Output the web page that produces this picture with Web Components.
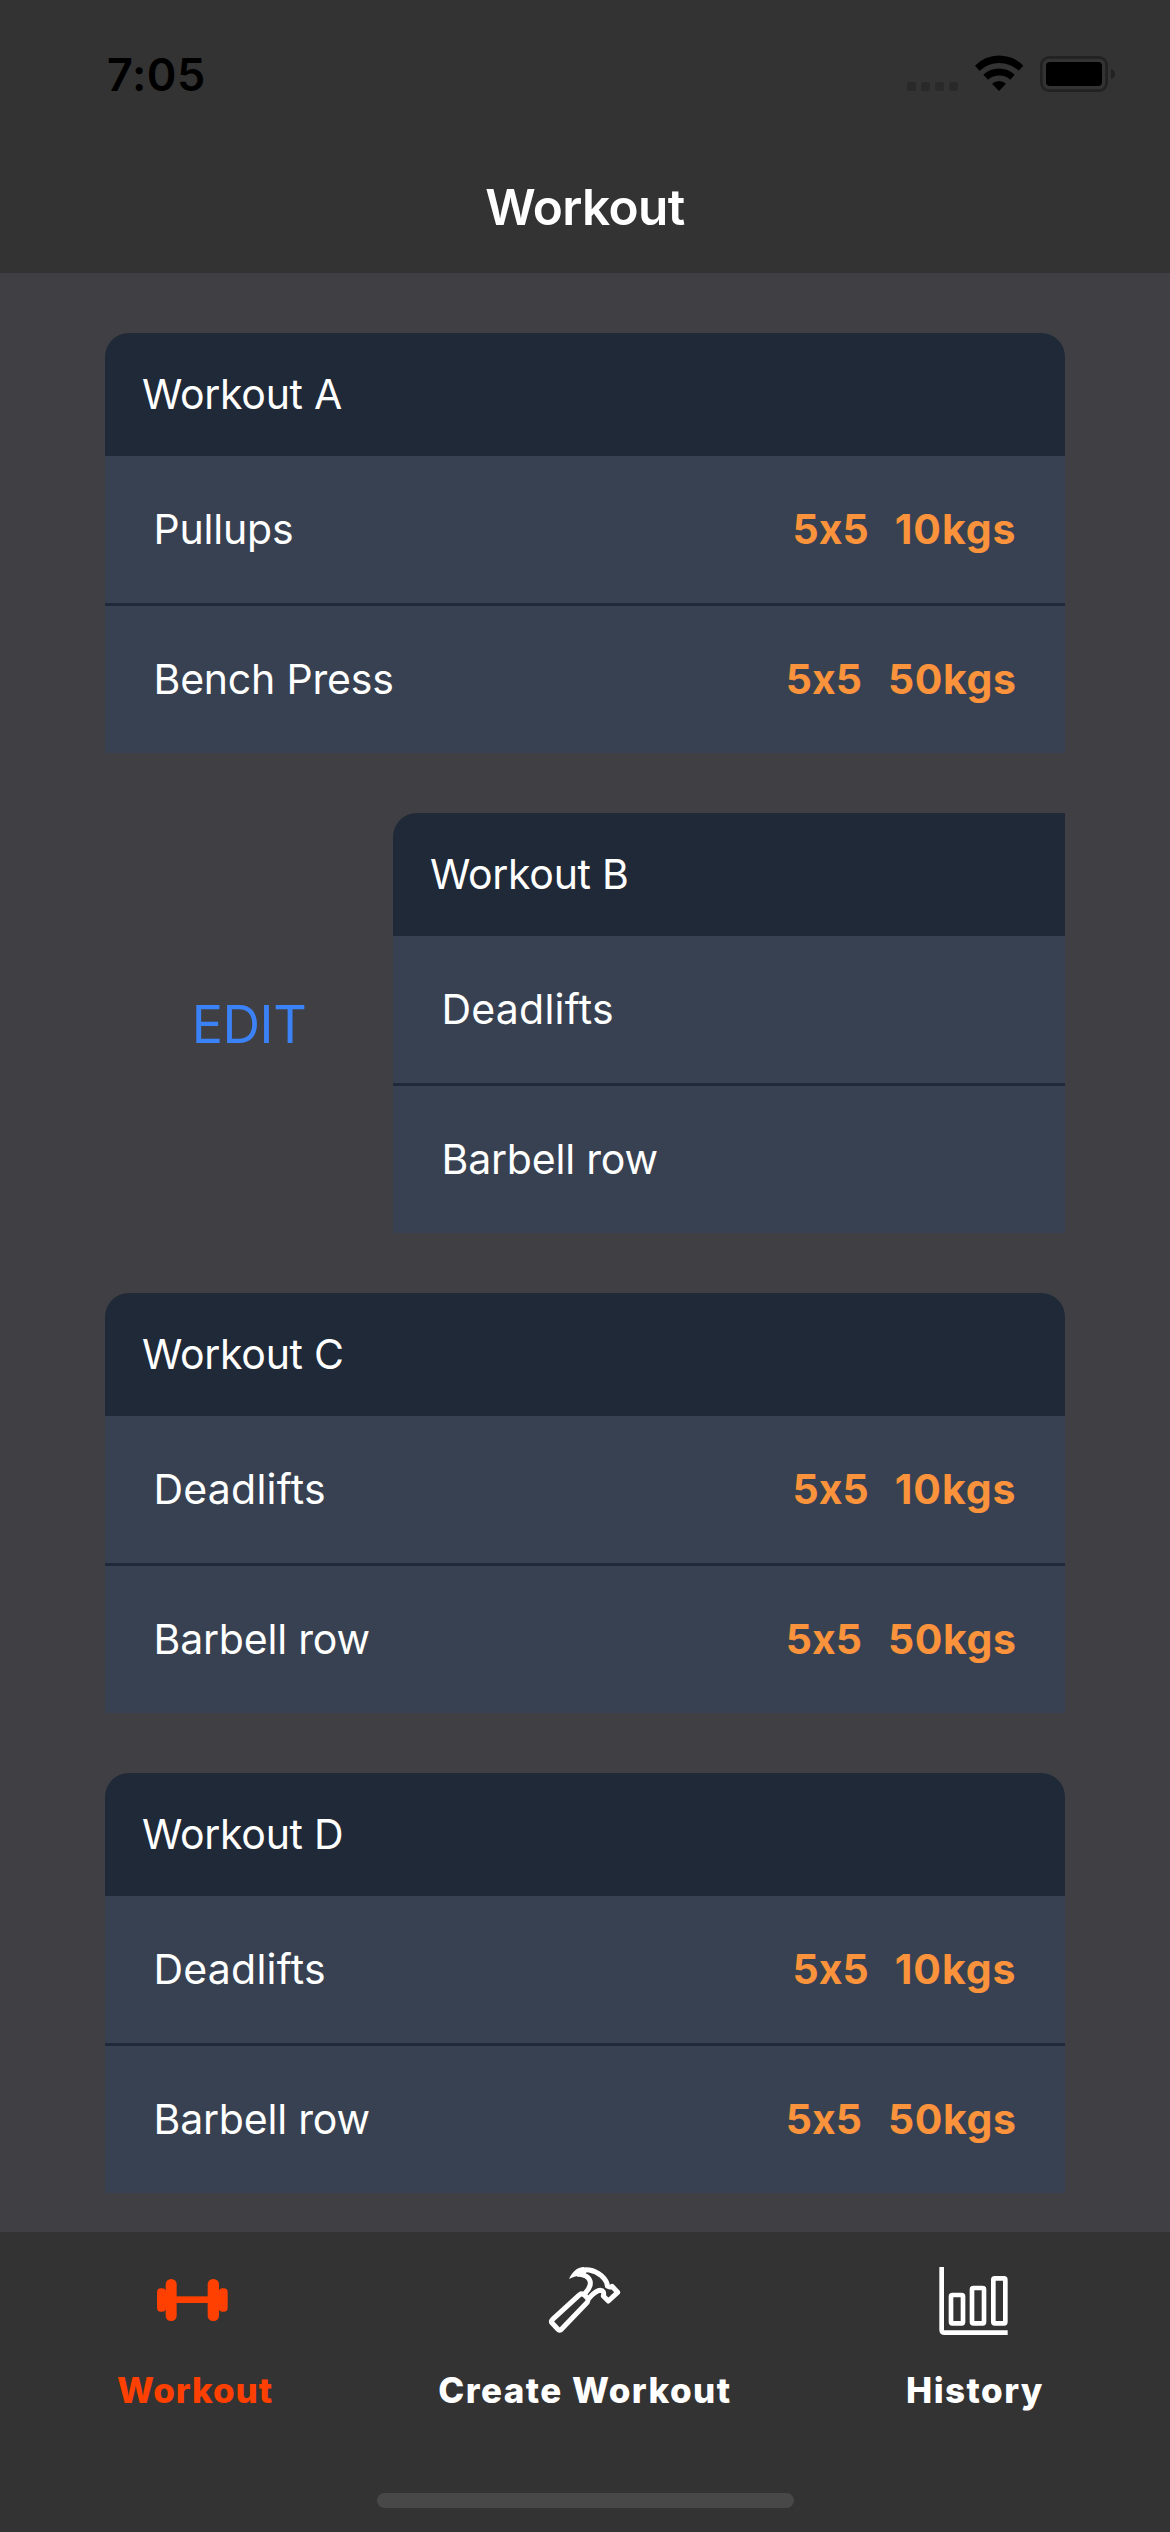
<!DOCTYPE html>
<html lang="en">
<head>
<meta charset="utf-8">
<title>Workout</title>
<style>
  body { margin: 0; background: #404044; font-family: Inter, "Liberation Sans", sans-serif; color: #fff; font-variant-ligatures: none; font-feature-settings: "calt" 0; }
</style>
</head>
<body>
<workout-app></workout-app>
<script>
const define = (name, html, init) => {
  const template = document.createElement('template');
  template.innerHTML = html;
  customElements.define(name, class extends HTMLElement {
    constructor() {
      super();
      this.attachShadow({ mode: 'open' }).append(template.content.cloneNode(true));
    }
    connectedCallback() { if (init) init.call(this, this.shadowRoot); }
  });
};

define('status-bar', `
<style>
  :host { display: flex; height: 141px; box-sizing: border-box; padding: 0 55px 0 107px; justify-content: space-between; align-items: flex-start; }
  .time { font-size: 45px; font-weight: 600; line-height: 149px; letter-spacing: .52px; color: #000; }
  svg { display: block; width: 216px; height: 60px; margin-top: 43px; }
</style>
<span class="time">7:05</span>
<svg viewBox="57 9 648 180">
  <g fill="#292929">
    <rect x="81" y="126" width="27" height="27" rx="8"/><rect x="123" y="126" width="27" height="27" rx="8"/>
    <rect x="165" y="126" width="27" height="27" rx="8"/><rect x="207" y="126" width="27" height="27" rx="8"/>
  </g>
  <path d="M285 77A101 101 0 0 1 430 77L416 92A86 86 0 0 0 299 92ZM310 104A69 69 0 0 1 404 104L391 119A51 51 0 0 0 324 119ZM336 131A31 31 0 0 1 378 131L357 153Z"/>
  <rect x="484" y="52" width="196" height="100" rx="24" fill="none" stroke="#222" stroke-width="8"/>
  <rect x="498" y="66" width="168" height="72" rx="12"/>
  <path d="M693 86Q705 91 705 102T693 118Z" fill="#222"/>
</svg>`);

define('nav-header', `
<style>
  :host { display: flex; flex-direction: column; height: 273px; background: #333; }
  h1 { margin: 0; font-size: 49.5px; font-weight: 600; letter-spacing: -.6px; line-height: 132px; text-align: center; }
</style>
<status-bar></status-bar>
<h1><slot></slot></h1>`);

define('exercise-row', `
<style>
  :host { display: flex; align-items: center; height: 147px; box-sizing: border-box; padding: 0 48.5px 2px; background: #374151; font-size: 41px; white-space: nowrap; }
  .name { flex: 1; letter-spacing: -.2px; }
  .values { display: flex; gap: 26px; font-weight: 700; color: #fb923c; }
  .load { letter-spacing: .6px; }
</style>
<span class="name"></span>
<span class="values"><span class="sets"></span><span class="load"></span></span>`, function (root) {
  const name = root.querySelector('.name');
  name.textContent = this.getAttribute('name');
  if (name.textContent === 'Deadlifts') name.style.letterSpacing = '.23px';
  root.querySelector('.sets').textContent = this.getAttribute('sets');
  const load = root.querySelector('.load');
  load.textContent = this.getAttribute('load');
  if (load.textContent.startsWith('1')) load.style.letterSpacing = '.95px';
});

define('workout-card', `
<style>
  :host { display: block; flex: 0 0 960px; }
  header { display: flex; align-items: center; height: 123px; box-sizing: border-box; padding: 0 0 2px 37px; border-radius: 24px 24px 0 0; background: #1f2937; font-size: 41px; letter-spacing: -.3px; }
  .rows { display: flex; flex-direction: column; gap: 3px; background: #1f2937; border-radius: 0 0 3px 3px; overflow: hidden; }
</style>
<header></header>
<div class="rows"><slot></slot></div>`, function (root) {
  root.querySelector('header').textContent = this.getAttribute('title-text');
});

define('swipe-row', `
<style>
  :host { display: flex; width: 960px; height: 420px; overflow: hidden; }
  .action { display: none; flex: 0 0 288px; align-items: center; justify-content: center; box-sizing: border-box; padding-top: 2px; font-size: 52px; letter-spacing: -.42px; color: #3b82f6; }
  :host([open]) .action { display: flex; }
</style>
<div class="action"></div><slot></slot>`, function (root) {
  root.querySelector('.action').textContent = this.hasAttribute('open') ? 'EDIT' : '';
});

define('tab-item', `
<style>
  :host { display: flex; flex: 1 1 0; flex-direction: column; align-items: center; padding-top: 18px; color: #fff; }
  :host([active]) { color: #ff4000; }
  ::slotted(svg) { display: block; width: 100px; height: 100px; }
  .label { margin-top: 19px; line-height: 42px; font-size: 35px; font-weight: 800; letter-spacing: var(--track, 1.3px); white-space: nowrap; }
</style>
<slot></slot><span class="label"></span>`, function (root) {
  root.querySelector('.label').textContent = this.getAttribute('label');
});

define('tab-bar', `
<style>
  :host { display: flex; flex-direction: column; height: 300px; background: #333; }
  nav { display: flex; height: 261px; }
  .home { width: 417px; height: 15px; margin: 0 auto; border-radius: 7.5px; background: #484848; }
</style>
<nav>
  <tab-item label="Workout" active style="--track:.95px">
    <svg viewBox="135 90 300 300" fill="currentColor">
      <rect x="171" y="205" width="27" height="70" rx="12"/><rect x="197" y="177" width="33" height="126" rx="16"/>
      <rect x="226" y="229" width="102" height="20"/>
      <rect x="323" y="177" width="34" height="126" rx="16"/><rect x="356" y="205" width="27" height="70" rx="12"/>
    </svg>
  </tab-item>
  <tab-item label="Create Workout" style="--track:1.46px">
    <svg viewBox="345 90 300 300" fill="none" stroke="currentColor" stroke-width="15" stroke-linejoin="round">
      <path d="M479 224L397 299Q391 305 397 310L413 327Q419 334 425 327L502 247Q505 243 503 235L493 225Q486 219 479 224Z"/>
      <path d="M470 163C490 160 511 171 511 190C511 204 503 211 493 223"/>
      <path d="M474 156C492 143 523 149 544 167C556 178 562 188 562 198Q569 203 576 199L593 217L565 243L550 228C553 217 549 211 541 211C527 212 518 223 505 236"/>
      <path d="M447 177C459 151 475 141 492 141L500 156L490 168C475 165 461 169 447 177Z" fill="currentColor" stroke="none"/>
    </svg>
  </tab-item>
  <tab-item label="History" style="--track:1.45px">
    <svg viewBox="135 90 300 300" fill="none" stroke="currentColor" stroke-width="14">
      <path d="M185 141V329Q185 338 194 338H383"/>
      <rect x="213" y="225" width="36" height="85" rx="4"/><rect x="276" y="204" width="36" height="106" rx="4"/><rect x="340" y="175" width="36" height="135" rx="4"/>
    </svg>
  </tab-item>
</nav>
<div class="home"></div>`);

define('workout-app', `
<style>
  :host { display: flex; flex-direction: column; width: 1170px; height: 2532px; overflow: hidden; background: #404044; }
  main { flex: 1; display: flex; flex-direction: column; align-items: center; gap: 60px; padding-top: 60px; min-height: 0; box-sizing: border-box; }
</style>
<nav-header>Workout</nav-header>
<main>
  <swipe-row><workout-card title-text="Workout A">
    <exercise-row name="Pullups" sets="5x5" load="10kgs"></exercise-row>
    <exercise-row name="Bench Press" sets="5x5" load="50kgs"></exercise-row>
  </workout-card></swipe-row>
  <swipe-row open><workout-card title-text="Workout B">
    <exercise-row name="Deadlifts"></exercise-row>
    <exercise-row name="Barbell row"></exercise-row>
  </workout-card></swipe-row>
  <swipe-row><workout-card title-text="Workout C">
    <exercise-row name="Deadlifts" sets="5x5" load="10kgs"></exercise-row>
    <exercise-row name="Barbell row" sets="5x5" load="50kgs"></exercise-row>
  </workout-card></swipe-row>
  <swipe-row><workout-card title-text="Workout D">
    <exercise-row name="Deadlifts" sets="5x5" load="10kgs"></exercise-row>
    <exercise-row name="Barbell row" sets="5x5" load="50kgs"></exercise-row>
  </workout-card></swipe-row>
</main>
<tab-bar></tab-bar>`);
</script>
</body>
</html>
